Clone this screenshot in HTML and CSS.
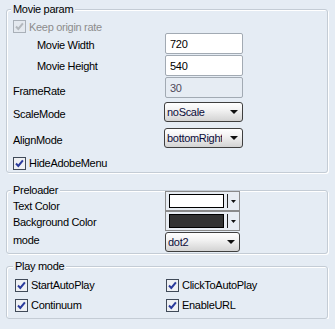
FILE: index.html
```html
<!DOCTYPE html>
<html lang="en">
<head>
    <meta charset="UTF-8">
    <title>Player settings</title>
    <link rel="stylesheet" href="styles.css">
</head>
<body>
    <fieldset class="group">
        <legend>Movie param</legend>
        <div class="row row-keep">
            <svg class="check" width="13" height="13" viewBox="0 0 13 13"><rect x="0.5" y="0.5" width="12" height="12" fill="#e4e9ef" stroke="#a9b0b8"/><path d="M3 6.5l2.3 2.4 4.6-5.6" fill="none" stroke="#b3b8bd" stroke-width="2"/></svg>
            <span class="muted">Keep origin rate</span>
        </div>
        <div class="row row-input">
            <label class="lbl indent lbl-w">Movie Width</label>
            <input class="field" type="text" value="720">
        </div>
        <div class="row row-input gap1">
            <label class="lbl indent lbl-h">Movie Height</label>
            <input class="field" type="text" value="540">
        </div>
        <div class="row row-input gap1">
            <label class="lbl lbl-fr">FrameRate</label>
            <input class="field" type="text" value="30" disabled>
        </div>
        <div class="row row-select gap4">
            <label class="lbl lbl-sel">ScaleMode</label>
            <div class="dropdown">
                <span class="dropdown-text">noScale</span>
                <svg class="arrow" width="8" height="4" viewBox="0 0 8 4"><path d="M0 0h8L4 4z" fill="#111"/></svg>
            </div>
        </div>
        <div class="row row-select gap6">
            <label class="lbl lbl-sel">AlignMode</label>
            <div class="dropdown">
                <span class="dropdown-text">bottomRight</span>
                <svg class="arrow" width="8" height="4" viewBox="0 0 8 4"><path d="M0 0h8L4 4z" fill="#111"/></svg>
            </div>
        </div>
        <div class="row row-check gap9">
            <svg class="check" width="13" height="13" viewBox="0 0 13 13"><rect x="0.5" y="0.5" width="12" height="12" fill="#eef0f3" stroke="#404a58"/><path d="M3 6.5l2.3 2.4 4.6-5.6" fill="none" stroke="#2b3b9c" stroke-width="2"/></svg>
            <span>HideAdobeMenu</span>
        </div>
    </fieldset>

    <fieldset class="group group-preloader">
        <legend>Preloader</legend>
        <div class="row row-picker first">
            <label class="lbl lbl-text">Text Color</label>
            <div class="picker">
                <span class="swatch swatch-white"></span>
                <span class="picker-sep"></span>
                <svg class="picker-arrow" width="5" height="3" viewBox="0 0 5 3"><path d="M0 0h5L2.5 3z" fill="#111"/></svg>
            </div>
        </div>
        <div class="row row-picker">
            <label class="lbl lbl-bg">Background Color</label>
            <div class="picker">
                <span class="swatch swatch-dark"></span>
                <span class="picker-sep"></span>
                <svg class="picker-arrow" width="5" height="3" viewBox="0 0 5 3"><path d="M0 0h5L2.5 3z" fill="#111"/></svg>
            </div>
        </div>
        <div class="row row-select gap1">
            <label class="lbl lbl-mode">mode</label>
            <div class="dropdown dropdown-narrow">
                <span class="dropdown-text">dot2</span>
                <svg class="arrow" width="8" height="4" viewBox="0 0 8 4"><path d="M0 0h8L4 4z" fill="#111"/></svg>
            </div>
        </div>
    </fieldset>

    <fieldset class="group group-play">
        <legend>Play mode</legend>
        <div class="play-grid">
            <div class="row row-check">
                <svg class="check" width="13" height="13" viewBox="0 0 13 13"><rect x="0.5" y="0.5" width="12" height="12" fill="#eef0f3" stroke="#404a58"/><path d="M3 6.5l2.3 2.4 4.6-5.6" fill="none" stroke="#2b3b9c" stroke-width="2"/></svg>
                <span>StartAutoPlay</span>
            </div>
            <div class="row row-check">
                <svg class="check" width="13" height="13" viewBox="0 0 13 13"><rect x="0.5" y="0.5" width="12" height="12" fill="#eef0f3" stroke="#404a58"/><path d="M3 6.5l2.3 2.4 4.6-5.6" fill="none" stroke="#2b3b9c" stroke-width="2"/></svg>
                <span>ClickToAutoPlay</span>
            </div>
            <div class="row row-check">
                <svg class="check" width="13" height="13" viewBox="0 0 13 13"><rect x="0.5" y="0.5" width="12" height="12" fill="#eef0f3" stroke="#404a58"/><path d="M3 6.5l2.3 2.4 4.6-5.6" fill="none" stroke="#2b3b9c" stroke-width="2"/></svg>
                <span>Continuum</span>
            </div>
            <div class="row row-check">
                <svg class="check" width="13" height="13" viewBox="0 0 13 13"><rect x="0.5" y="0.5" width="12" height="12" fill="#eef0f3" stroke="#404a58"/><path d="M3 6.5l2.3 2.4 4.6-5.6" fill="none" stroke="#2b3b9c" stroke-width="2"/></svg>
                <span>EnableURL</span>
            </div>
        </div>
    </fieldset>
</body>
</html>
```

FILE: styles.css
```css
body {
    margin: 0;
    padding: 3px 7px 0 6px;
    background-color: #e5ecf4;
    font-family: "Liberation Sans", Arial, sans-serif;
    font-size: 11px;
    letter-spacing: -0.3px;
    color: #000;
}
.group {
    margin: 0;
    padding: 0 6px 3px 6px;
    border: 1px solid #c4ccd5;
    border-radius: 3px;
    box-shadow: inset 1px 1px 0 #fff, 1px 1px 0 #fff;
}
.group legend {
    margin-left: -2px;
    padding: 0 2px;
    line-height: 13px;
    background-color: #e5ecf4;
}
.group-preloader {
    margin-top: 11px;
    padding-bottom: 1px;
}
.group-play {
    margin-top: 6px;
    padding-left: 8px;
    padding-bottom: 7px;
}
.row {
    display: flex;
    align-items: center;
}
.row-keep {
    margin-top: 4px;
}
.row-check {
    height: 12px;
}
.row-input {
    height: 21px;
}
.row-select, .row-picker {
    height: 20px;
}
.row-picker.first {
    margin-top: -6px;
}
.gap1 { margin-top: 1px; }
.gap4 { margin-top: 4px; }
.gap6 { margin-top: 6px; }
.gap9 { margin-top: 9px; }
.check {
    flex: none;
    margin-right: 3px;
}
.muted {
    color: #8d8d8d;
}
.lbl {
    flex: none;
    width: 151px;
    box-sizing: border-box;
    line-height: 13px;
}
.indent {
    padding-left: 24px;
}
.lbl-w { padding-top: 3px; }
.lbl-h { padding-top: 1px; }
.lbl-fr { padding-top: 7px; }
.lbl-sel { padding-top: 4px; }
.lbl-text { padding-top: 10px; }
.lbl-bg { padding-top: 2px; }
.lbl-mode { padding-bottom: 4px; }
.field {
    width: 78px;
    height: 21px;
    box-sizing: border-box;
    margin: 0 0 0 1px;
    padding: 0 4px;
    border: 1px solid #a2aab3;
    border-radius: 2px;
    background: #fff;
    font: inherit;
    letter-spacing: inherit;
    color: #000;
}
.field:disabled {
    background: #e6ecf3;
    color: #4f4a5a;
}
.dropdown {
    display: flex;
    align-items: center;
    width: 79px;
    height: 20px;
    box-sizing: border-box;
    padding: 0 4px 0 2px;
    border: 1px solid #3f3f3f;
    border-radius: 3px;
    background: linear-gradient(#ffffff, #f2f2f2 40%, #d3d3d3);
}
.dropdown-narrow {
    width: 75px;
    margin-left: 1px;
}
.dropdown-text {
    flex: 1;
    overflow: hidden;
    white-space: nowrap;
    margin-right: 8px;
    color: #0c0c3a;
}
.arrow {
    flex: none;
}
.picker {
    display: flex;
    align-items: center;
    width: 75px;
    height: 20px;
    box-sizing: border-box;
    margin-left: 1px;
    padding: 0 3px 0 3px;
    border: 1px solid #8a8a8a;
    background: #e8edf3;
}
.swatch {
    width: 56px;
    height: 14px;
    box-sizing: border-box;
    border: 1px solid #000;
}
.swatch-white { background: #fff; }
.swatch-dark { background: #333; }
.picker-sep {
    width: 1px;
    height: 14px;
    margin: 0 3px;
    background: #222;
}
.play-grid {
    display: grid;
    grid-template-columns: 151px auto;
    row-gap: 8px;
    margin-top: 6px;
}
```
